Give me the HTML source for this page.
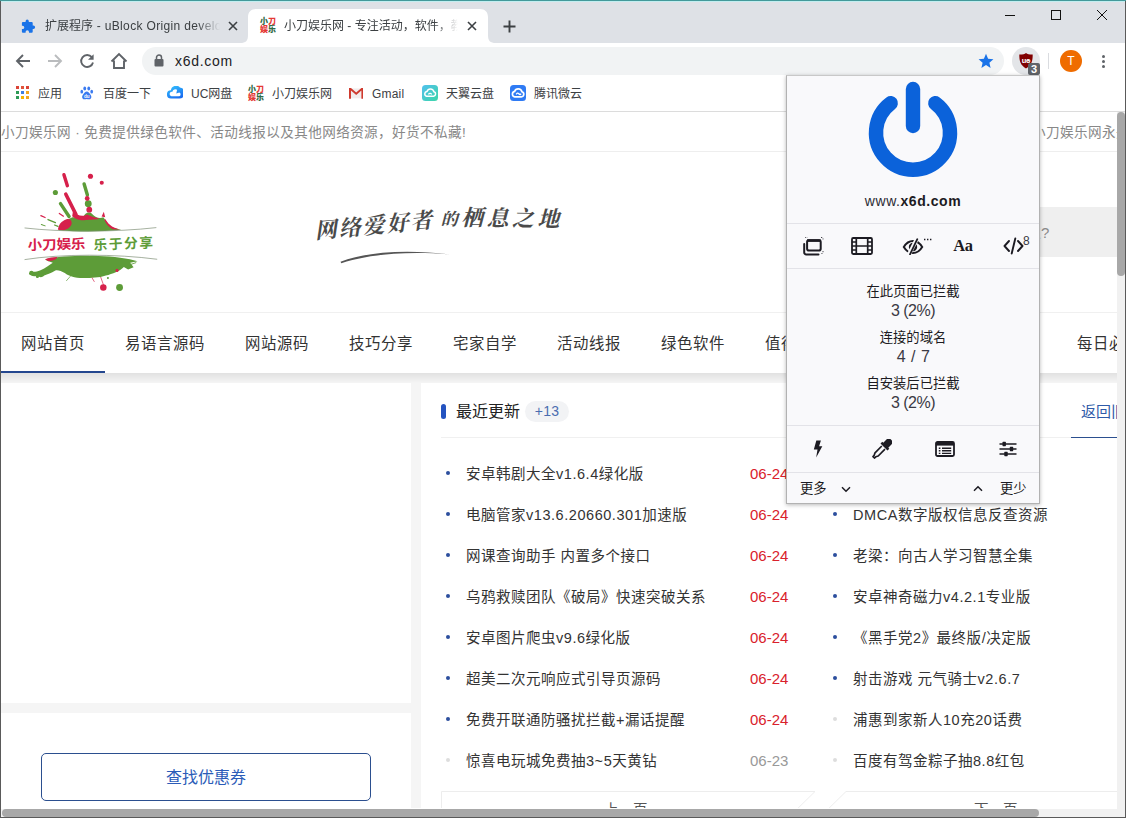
<!DOCTYPE html>
<html lang="zh-CN">
<head>
<meta charset="utf-8">
<title>小刀娱乐网 - 专注活动，软件，教程分享</title>
<style>
*{box-sizing:border-box;margin:0;padding:0}
html,body{width:1126px;height:818px;overflow:hidden;background:#fff}
body{font-family:"Liberation Sans","Noto Sans CJK SC",sans-serif;color:#333;position:relative}
.abs{position:absolute}
#win{position:absolute;left:0;top:0;width:1126px;height:818px;overflow:hidden;background:#fff}
/* ---------- chrome ---------- */
#tabstrip{left:0;top:0;width:1126px;height:43px;background:#dee1e6}
#topline{left:0;top:0;width:1126px;height:2px;background:linear-gradient(#43999a 0,#43999a 50%,#c2eef0 50%,#c2eef0 100%)}
#toolbar{left:0;top:42px;width:1126px;height:36px;background:linear-gradient(transparent 0,transparent 1px,#fff 1px,#fff 100%)}
#bookmarks{left:0;top:78px;width:1126px;height:33px;background:#fff}
#bmline{left:0;top:111px;width:1126px;height:1px;background:#dcdcdc}
.tabtxt i{font-style:normal;letter-spacing:.35px}
.tabtxt{font-size:12px;color:#3c4043;white-space:nowrap;overflow:hidden}
.bm{font-size:12px;color:#3c4043;white-space:nowrap;top:86px;line-height:16px}
#omni{left:142px;top:47px;width:862px;height:28px;border-radius:14px;background:#f1f3f4}
/* ---------- page ---------- */
#page{left:1px;top:112px;width:1116px;height:696px;background:#f5f5f5;overflow:hidden}
#topbar{left:0;top:0;width:1116px;height:40px;background:#fff;border-bottom:1px solid #eee;font-size:13.600px;letter-spacing:.4px;color:#888;line-height:39px;white-space:nowrap}
#header{left:0;top:40px;width:1116px;height:160px;background:#fff}
#nav{left:0;top:200px;width:1116px;height:61px;background:#fff;border-top:1px solid #f0f0f0;}
.navi{top:1px;height:60px;line-height:60px;font-size:15.400px;letter-spacing:.6px;color:#333;white-space:nowrap}
.card{background:#fff}
.li{font-size:14.500px;letter-spacing:.5px;color:#333;white-space:nowrap;line-height:20px}
.dt{font-size:15px;white-space:nowrap;line-height:20px;color:#d9212c}
.li i{font-style:normal;letter-spacing:.55px}
.dot{width:4px;height:4px;border-radius:2px;background:#2c4f9e;margin-top:-1px}
.dot.g{background:#ddd}
/* ---------- popup ---------- */
#popup{left:786px;top:75px;width:254px;height:429px;background:#f9f9fb;border:1px solid #b2b2b2;border-top-color:#c8c8c8;box-shadow:0 1px 4px rgba(0,0,0,.28);font-size:14px;color:#1c1b22}
.stat-l{left:0;width:252px;text-align:center;font-size:13.3px;line-height:16px;color:#1c1b22}
.stat-v{left:0;width:252px;text-align:center;font-size:16px;line-height:20px;color:#3a3a44;letter-spacing:-.5px}
.hr{left:0;width:252px;height:1px;background:#e3e3e8}
</style>
</head>
<body>
<div id="win">

<!-- ================= PAGE ================= -->
<div id="page" class="abs">
  <div id="topbar" class="abs"><span class="abs" style="left:0px;top:1px">小刀娱乐网 · 免费提供绿色软件、活动线报以及其他网络资源，好货不私藏!</span><span class="abs" style="left:1031px;top:1px">小刀娱乐网永久地址</span></div>
  <div id="header" class="abs">
    <!-- logo: traced in 5.84x zoom coords of region (10,160) -->
    <svg class="abs" style="left:9px;top:8px" width="170" height="140" viewBox="0 0 993 818">
      <g fill="#5d9c38" stroke="none">
        <path d="M285 410 C300 370 340 345 365 335 C390 330 410 345 430 330 C440 305 465 300 480 315 C500 335 520 345 545 335 C555 345 565 370 590 390 C610 400 630 402 650 408 C530 420 400 420 285 410 Z"/>
        <circle cx="265" cy="190" r="15"/><circle cx="457" cy="255" r="20"/>
        <path d="M205 580 C330 553 560 553 700 580 L745 592 L702 601 L722 626 L690 640 L665 625 C640 650 600 665 560 675 C520 690 470 688 440 690 C400 690 350 685 320 660 C300 650 280 640 265 645 C240 660 220 665 200 675 C185 690 170 685 160 675 C140 685 115 675 110 662 C125 650 150 655 175 645 C210 630 235 610 250 600 C235 595 215 590 205 580 Z"/>
        <circle cx="125" cy="660" r="13"/><circle cx="160" cy="680" r="9"/><circle cx="640" cy="745" r="20"/><circle cx="572" cy="690" r="6"/>
      </g>
      <g stroke="#5d9c38" stroke-linecap="round" fill="none">
        <path d="M295 255 L345 330" stroke-width="20"/><path d="M433 140 L452 205" stroke-width="20"/>
        <path d="M222 348 L265 366" stroke-width="8"/><path d="M183 377 L205 385" stroke-width="6"/><path d="M260 380 L280 388" stroke-width="7"/>
        <path d="M352 680 L330 705" stroke-width="4"/><path d="M700 612 L735 600" stroke-width="5"/>
      </g>
      <g fill="#d6204b" stroke="none">
        <path d="M280 408 C282 380 300 355 330 346 C350 342 362 355 360 372 C355 392 335 405 315 410 Z"/>
        <path d="M368 300 C390 328 430 332 450 318 C470 330 500 335 522 342 C500 352 470 346 450 351 C420 354 390 350 363 328 Z"/>
        <path d="M535 330 L548 303 L556 335 Z"/>
        <path d="M556 345 C580 385 610 400 645 406 L600 405 C580 396 563 376 552 352 Z"/>
        <circle cx="470" cy="95" r="15"/><circle cx="536" cy="133" r="12"/><circle cx="451" cy="225" r="14"/><circle cx="463" cy="290" r="17"/>
        <path d="M205 580 C225 572 255 567 277 567 C272 582 247 590 225 592 Z"/>
        <circle cx="545" cy="745" r="19"/><circle cx="625" cy="645" r="9"/>
      </g>
      <g stroke="#d6204b" stroke-linecap="round" fill="none">
        <path d="M315 86 L335 150" stroke-width="20"/><path d="M326 200 L385 318" stroke-width="21"/>
        <path d="M180 325 L205 336" stroke-width="7"/><path d="M288 312 L312 328" stroke-width="7"/>
        <path d="M480 690 L492 710" stroke-width="4"/><path d="M530 685 L548 735" stroke-width="4"/>
      </g>
      <path d="M85 397 C300 422 620 422 855 395" stroke="#7d8c74" stroke-width="4" fill="none"/>
      <path d="M85 582 C300 548 620 548 860 580" stroke="#7d8c74" stroke-width="4" fill="none"/>
      <text x="103" y="522" font-size="80" font-weight="700" fill="#d6204b" font-family="Liberation Sans, Noto Sans CJK SC, sans-serif" textLength="338" lengthAdjust="spacingAndGlyphs" transform="rotate(-1.500 270 500)">小刀娱乐</text>
      <text x="488" y="518" font-size="80" font-weight="700" fill="#5d9c38" font-family="Liberation Sans, Noto Sans CJK SC, sans-serif" textLength="348" lengthAdjust="spacing" transform="rotate(-2.500 660 495)">乐于分享</text>
    </svg>
    <!-- slogan -->
    <div class="abs" style="left:313px;top:63px;width:130px;height:34px;font-family:'Liberation Serif','Noto Serif CJK SC',serif;font-weight:700;font-size:22px;line-height:34px;color:#4a4a4a;white-space:nowrap;transform-origin:0 100%;letter-spacing:2px;transform:rotate(-5.500deg) skewX(-14deg)">网络爱好者</div>
    <div class="abs" style="left:437px;top:49px;width:130px;height:34px;font-family:'Liberation Serif','Noto Serif CJK SC',serif;font-weight:700;font-size:22px;line-height:34px;color:#4a4a4a;white-space:nowrap;transform-origin:0 100%;letter-spacing:3.400px;transform:rotate(0.800deg) skewX(-14deg)"><span style="font-size:17px">的</span>栖息之地</div>
    <svg class="abs" style="left:336px;top:94px" width="120" height="20" viewBox="0 0 120 20"><path d="M3.500 15.800 C30 5.500 70 3 113 8.400 C70 5 32 8 4.300 17.300 Z" fill="#555"/></svg>
    <!-- search box -->
    <div class="abs" style="left:1030px;top:55px;width:90px;height:50px;background:#efefef"></div>
    <div class="abs" style="left:1025px;top:69px;font-size:15px;line-height:24px;color:#8a8a8a;white-space:nowrap">么?</div>
  </div>
  <div id="nav" class="abs">
    <span class="abs navi" style="left:20px">网站首页</span>
    <span class="abs navi" style="left:124px">易语言源码</span>
    <span class="abs navi" style="left:244px">网站源码</span>
    <span class="abs navi" style="left:348px">技巧分享</span>
    <span class="abs navi" style="left:452px">宅家自学</span>
    <span class="abs navi" style="left:556px">活动线报</span>
    <span class="abs navi" style="left:660px">绿色软件</span>
    <span class="abs navi" style="left:764px">值得一看</span>
    <span class="abs navi" style="left:1076px">每日必买</span>
    <div class="abs" style="left:0;top:58px;width:104px;height:2px;background:#24478f"></div>
  </div>
  <div class="abs" style="left:0;top:261px;width:1116px;height:10px;background:linear-gradient(#e1e1e1,#f5f5f5)"></div>
  <div class="abs card" style="left:0;top:271px;width:410px;height:320px"></div>
  <div class="abs card" style="left:0;top:601px;width:410px;height:120px">
    <div class="abs" style="left:40px;top:40px;width:330px;height:48px;border:1px solid #2b4f8f;border-radius:5px;color:#2b5cb8;font-size:16px;line-height:48px;text-align:center">查找优惠券</div>
  </div>
  <div class="abs card" id="rcard" style="left:420px;top:271px;width:700px;height:440px">
    <div class="abs" style="left:20px;top:21px;width:5px;height:15px;border-radius:2.500px;background:#2453c0"></div>
    <div class="abs" style="left:35px;top:17px;font-size:16px;line-height:24px;color:#222;white-space:nowrap">最近更新</div>
    <div class="abs" style="left:104px;top:18px;width:44px;height:21px;border-radius:11px;background:#f2f3f5;color:#4a6db0;font-size:14px;line-height:21px;text-align:center;letter-spacing:.3px">+13</div>
    <div class="abs" style="left:660px;top:17px;font-size:15px;line-height:24px;color:#2f5aa8;white-space:nowrap">返回旧版</div>
    <div class="abs" style="left:20px;top:54px;width:680px;height:1px;background:#f0f0f0"></div>
    <div class="abs" style="left:650px;top:54px;width:50px;height:1px;background:#2b4f8f"></div>
    <div class="abs dot" style="left:25px;top:89px"></div><div class="abs li" style="left:45px;top:81px">安卓韩剧大全<i>v1.6.4</i>绿化版</div><div class="abs dt" style="left:329px;top:81px">06-24</div>
    <div class="abs dot" style="left:25px;top:130px"></div><div class="abs li" style="left:45px;top:122px">电脑管家<i>v13.6.20660.301</i>加速版</div><div class="abs dt" style="left:329px;top:122px">06-24</div>
    <div class="abs dot" style="left:25px;top:171px"></div><div class="abs li" style="left:45px;top:163px">网课查询助手 内置多个接口</div><div class="abs dt" style="left:329px;top:163px">06-24</div>
    <div class="abs dot" style="left:25px;top:212px"></div><div class="abs li" style="left:45px;top:204px">乌鸦救赎团队《破局》快速突破关系</div><div class="abs dt" style="left:329px;top:204px">06-24</div>
    <div class="abs dot" style="left:25px;top:253px"></div><div class="abs li" style="left:45px;top:245px">安卓图片爬虫<i>v9.6</i>绿化版</div><div class="abs dt" style="left:329px;top:245px">06-24</div>
    <div class="abs dot" style="left:25px;top:294px"></div><div class="abs li" style="left:45px;top:286px">超美二次元响应式引导页源码</div><div class="abs dt" style="left:329px;top:286px">06-24</div>
    <div class="abs dot" style="left:25px;top:335px"></div><div class="abs li" style="left:45px;top:327px">免费开联通防骚扰拦截+漏话提醒</div><div class="abs dt" style="left:329px;top:327px">06-24</div>
    <div class="abs dot g" style="left:25px;top:376px"></div><div class="abs li" style="left:45px;top:368px">惊喜电玩城免费抽<i>3~5</i>天黄钻</div><div class="abs dt" style="left:329px;top:368px;color:#999">06-23</div>
    <div class="abs dot" style="left:412px;top:89px"></div><div class="abs li" style="left:432px;top:81px">微信读书每周组队抽无限卡</div>
    <div class="abs dot" style="left:412px;top:130px"></div><div class="abs li" style="left:432px;top:122px"><i>DMCA</i>数字版权信息反查资源</div>
    <div class="abs dot" style="left:412px;top:171px"></div><div class="abs li" style="left:432px;top:163px">老梁：向古人学习智慧全集</div>
    <div class="abs dot" style="left:412px;top:212px"></div><div class="abs li" style="left:432px;top:204px">安卓神奇磁力<i>v4.2.1</i>专业版</div>
    <div class="abs dot" style="left:412px;top:253px"></div><div class="abs li" style="left:432px;top:245px">《黑手党<i>2</i>》最终版<i>/</i>决定版</div>
    <div class="abs dot" style="left:412px;top:294px"></div><div class="abs li" style="left:432px;top:286px">射击游戏 元气骑士<i>v2.6.7</i></div>
    <div class="abs dot g" style="left:412px;top:335px"></div><div class="abs li" style="left:432px;top:327px">浦惠到家新人<i>10</i>充<i>20</i>话费</div>
    <div class="abs dot g" style="left:412px;top:376px"></div><div class="abs li" style="left:432px;top:368px">百度有驾金粽子抽<i>8.8</i>红包</div>
    <svg class="abs" style="left:20px;top:408px" width="680" height="30" viewBox="0 0 680 30"><path d="M0.500 30 V0.500 H374 L344 30 M680 0.500 H405 L375 30" stroke="#ededed" stroke-width="1" fill="none"/></svg>
    <div class="abs" style="left:183px;top:417px;font-size:14.500px;line-height:20px;color:#555;white-space:nowrap">上一页</div>
    <div class="abs" style="left:553px;top:417px;font-size:14.500px;line-height:20px;color:#555;white-space:nowrap">下一页</div>
  </div>
</div>

<!-- ================= CHROME ================= -->
<div id="tabstrip" class="abs">
  <!-- active tab shape -->
  <svg class="abs" style="left:240px;top:9px" width="256" height="34" viewBox="0 0 256 33" preserveAspectRatio="none">
    <path d="M0 33 C6 33 8 31 8 25 L8 8 C8 3 11 0 16 0 L240 0 C245 0 248 3 248 8 L248 25 C248 31 250 33 256 33 Z" fill="#fff"/>
  </svg>
  <!-- tab 1 -->
  <svg class="abs" style="left:21px;top:19px" width="15" height="15" viewBox="0 0 15 15">
    <path d="M6.2 0.6 a1.6 1.6 0 0 1 1.6 1.6 v0.7 h2.9 a1 1 0 0 1 1 1 v2.6 h0.7 a1.7 1.7 0 0 1 0 3.4 h-0.7 v2.9 a1 1 0 0 1 -1 1 h-2.7 v-0.8 a1.7 1.7 0 0 0 -3.4 0 v0.8 h-2.7 a1 1 0 0 1 -1 -1 v-2.7 h0.7 a1.7 1.7 0 0 0 0 -3.4 h-0.7 v-2.8 a1 1 0 0 1 1 -1 h2.7 v-0.7 a1.6 1.6 0 0 1 1.6 -1.6 z" fill="#1a73e8"/>
  </svg>
  <div class="abs tabtxt" style="left:45px;top:18px;width:178px;height:17px;line-height:17px;-webkit-mask-image:linear-gradient(90deg,#000 152px,transparent 175px);mask-image:linear-gradient(90deg,#000 152px,transparent 175px)">扩展程序<i> - uBlock Origin development</i></div>
  <svg class="abs" style="left:228px;top:21px" width="10" height="10" viewBox="0 0 10 10"><path d="M1 1 L9 9 M9 1 L1 9" stroke="#3c4043" stroke-width="1.6" fill="none"/></svg>
  <!-- tab 2 favicon -->
  <div class="abs" style="left:260px;top:18px;width:16px;height:16px;font-size:8px;line-height:8px;font-weight:900;letter-spacing:0;white-space:nowrap"><span style="color:#2f6a45">小</span><span style="color:#e53935">刀</span><br><span style="color:#e53935">娱</span><span style="color:#2f6a45">乐</span></div>
  <div class="abs tabtxt" style="left:284px;top:18px;width:178px;height:17px;line-height:17px;-webkit-mask-image:linear-gradient(90deg,#000 150px,transparent 174px);mask-image:linear-gradient(90deg,#000 150px,transparent 174px)">小刀娱乐网 - 专注活动，软件，教程分享</div>
  <svg class="abs" style="left:467px;top:21px" width="10" height="10" viewBox="0 0 10 10"><path d="M1 1 L9 9 M9 1 L1 9" stroke="#3c4043" stroke-width="1.6" fill="none"/></svg>
  <!-- new tab -->
  <svg class="abs" style="left:503px;top:20px" width="13" height="13" viewBox="0 0 13 13"><path d="M6.5 0.5 V12.5 M0.5 6.5 H12.5" stroke="#3c4043" stroke-width="1.9" fill="none"/></svg>
  <!-- window controls -->
  <div class="abs" style="left:1005px;top:15px;width:10px;height:1px;background:#111"></div>
  <div class="abs" style="left:1051px;top:10px;width:10px;height:10px;border:1px solid #111"></div>
  <svg class="abs" style="left:1097px;top:10px" width="10" height="10" viewBox="0 0 10 10"><path d="M0 0 L10 10 M10 0 L0 10" stroke="#111" stroke-width="1" fill="none"/></svg>
</div>
<div id="toolbar" class="abs">
  <!-- back -->
  <svg class="abs" style="left:15px;top:11px" width="16" height="16" viewBox="0 0 16 16"><path d="M15 8 H2.5 M8 2 L2 8 L8 14" stroke="#5f6368" stroke-width="1.9" fill="none"/></svg>
  <!-- forward -->
  <svg class="abs" style="left:47px;top:11px" width="16" height="16" viewBox="0 0 16 16"><path d="M1 8 H13.5 M8 2 L14 8 L8 14" stroke="#babcbe" stroke-width="1.9" fill="none"/></svg>
  <!-- reload -->
  <svg class="abs" style="left:79px;top:11px" width="16" height="16" viewBox="0 0 16 16"><path d="M12.8 4.2 A6 6 0 1 0 14 9.5" stroke="#5f6368" stroke-width="1.9" fill="none"/><path d="M14.6 1.2 V6.8 H9 Z" fill="#5f6368"/></svg>
  <!-- home -->
  <svg class="abs" style="left:110px;top:10px" width="18" height="18" viewBox="0 0 18 18"><path d="M1.5 9.5 L9 2 L16.5 9.5 M4 8.5 V16 H14 V8.5" stroke="#5f6368" stroke-width="1.9" fill="none" stroke-linejoin="miter"/></svg>
  <!-- ublock button -->
  <div class="abs" style="left:1012px;top:5px;width:28px;height:28px;border-radius:14px;background:#e3e5e8"></div>
  <svg class="abs" style="left:1019px;top:11px" width="14" height="15.500" viewBox="0 0 14 15.500"><path d="M7 0 C5.600 1.100 3.400 1.700 0.300 1.600 C0.200 8 1.600 12.600 7 15.400 C12.400 12.600 13.800 8 13.700 1.600 C10.600 1.700 8.400 1.100 7 0 Z" fill="#800000"/><text x="7.100" y="9.600" font-size="7.500" font-weight="bold" font-family="Liberation Sans, sans-serif" fill="#fff" text-anchor="middle" letter-spacing="-0.3">uo</text><circle cx="9.100" cy="7.400" r="0.900" fill="#fff"/></svg>
  <div class="abs" style="left:1028px;top:21px;width:12px;height:12px;border-radius:2px;background:#5f6368;color:#fff;font-size:11px;line-height:12px;font-weight:bold;text-align:center">3</div>
  <div class="abs" style="left:1048px;top:11px;width:1px;height:16px;background:#dadce0"></div>
  <div class="abs" style="left:1060px;top:8px;width:22px;height:22px;border-radius:11px;background:#ef6c00;color:#fff;font-size:12px;line-height:22px;text-align:center">T</div>
  <div class="abs" style="left:1102px;top:13px;width:3px;height:3px;border-radius:2px;background:#5f6368"></div>
  <div class="abs" style="left:1102px;top:18px;width:3px;height:3px;border-radius:2px;background:#5f6368"></div>
  <div class="abs" style="left:1102px;top:23px;width:3px;height:3px;border-radius:2px;background:#5f6368"></div>
</div>
<div id="omni" class="abs">
  <svg class="abs" style="left:12px;top:7px" width="10" height="13" viewBox="0 0 10 13"><path d="M2.500 5 V3.500 a2.500 2.500 0 0 1 5 0 V5" stroke="#5f6368" stroke-width="1.500" fill="none"/><rect x="0.5" y="5" width="9" height="7.500" rx="1" fill="#5f6368"/></svg>
  <div class="abs" style="left:33px;top:5px;font-size:14px;line-height:18px;color:#202124;white-space:nowrap;letter-spacing:.7px">x6d.com</div>
  <svg class="abs" style="left:836px;top:6px" width="16" height="16" viewBox="0 0 16 16"><path d="M8 0.800 L10.100 5.700 L15.400 6.200 L11.400 9.700 L12.600 14.900 L8 12.100 L3.400 14.900 L4.600 9.700 L0.600 6.200 L5.900 5.700 Z" fill="#1a73e8"/></svg>
</div>
<div id="bookmarks" class="abs">
  <!-- apps -->
  <svg class="abs" style="left:16px;top:8px" width="13" height="13" viewBox="0 0 13 13">
    <rect x="0" y="0" width="3" height="3" fill="#db4437"/><rect x="5" y="0" width="3" height="3" fill="#e0523a"/><rect x="10" y="0" width="3" height="3" fill="#db4437"/>
    <rect x="0" y="5" width="3" height="3" fill="#2e9a56"/><rect x="5" y="5" width="3" height="3" fill="#3f7fe0"/><rect x="10" y="5" width="3" height="3" fill="#f2a520"/>
    <rect x="0" y="10" width="3" height="3" fill="#2e9a56"/><rect x="5" y="10" width="3" height="3" fill="#f4b400"/><rect x="10" y="10" width="3" height="3" fill="#f2a520"/>
  </svg>
  <!-- baidu paw -->
  <svg class="abs" style="left:80px;top:8px" width="13.500" height="14.300" viewBox="0 0 16 17">
    <ellipse cx="5.600" cy="3" rx="1.700" ry="2.400" fill="#3a7af0"/><ellipse cx="10.400" cy="3" rx="1.700" ry="2.400" fill="#3a7af0"/>
    <ellipse cx="2.100" cy="6.800" rx="1.600" ry="2.200" fill="#3a7af0"/><ellipse cx="13.900" cy="6.800" rx="1.600" ry="2.200" fill="#3a7af0"/>
    <path d="M8 6.500 C10 6.500 11 8.500 12.500 10.300 C14.300 12.300 13.500 15.800 10.800 15.800 C9.600 15.800 8.900 15.400 8 15.400 C7.100 15.400 6.400 15.800 5.200 15.800 C2.500 15.800 1.700 12.300 3.500 10.300 C5 8.500 6 6.500 8 6.500 Z" fill="#3a7af0"/>
    <text x="8" y="14.300" font-size="5.500" font-family="Liberation Sans, sans-serif" font-weight="bold" fill="#fff" text-anchor="middle">du</text>
  </svg>
  <!-- UC cloud -->
  <svg class="abs" style="left:167px;top:8px" width="16" height="13" viewBox="0 0 16 13">
    <defs><linearGradient id="ucg" x1="0" y1="0" x2="0.600" y2="1"><stop offset="0" stop-color="#35c8ff"/><stop offset="1" stop-color="#1a6cf0"/></linearGradient></defs>
    <path d="M4.200 12.500 H12 A3.800 3.800 0 0 0 12.900 1.400 A5.200 5.200 0 0 0 3.900 4.300 A4.100 4.100 0 0 0 4.200 12.500 Z" fill="url(#ucg)"/>
    <path d="M4.400 10.300 H11.800 A1.900 1.900 0 0 0 12.300 6.600 L9.300 7.600 L10.100 3.700 A3.300 3.300 0 0 0 5.400 5.800 A2.300 2.300 0 0 0 4.400 10.300 Z" fill="#fff"/>
  </svg>
  <!-- xiaodao favicon -->
  <div class="abs" style="left:248px;top:8px;width:16px;height:16px;font-size:8px;line-height:8px;font-weight:900;white-space:nowrap"><span style="color:#2f6a45">小</span><span style="color:#e53935">刀</span><br><span style="color:#e53935">娱</span><span style="color:#2f6a45">乐</span></div>
  <!-- gmail -->
  <svg class="abs" style="left:349px;top:10px" width="14.400" height="10.800" viewBox="0 0 16 12">
    <rect x="0.500" y="0.500" width="15" height="11" fill="#f1ecec"/>
    <path d="M0 0 H2.200 L8 5 L13.800 0 H16 V12 H13.800 V2.900 L8 7.900 L2.200 2.900 V12 H0 Z" fill="#cf392e"/>
  </svg>
  <!-- tianyi -->
  <svg class="abs" style="left:422px;top:7px" width="16" height="16" viewBox="0 0 16 16">
    <defs><linearGradient id="tyg" x1="0" y1="0" x2="1" y2="1"><stop offset="0" stop-color="#52c0ee"/><stop offset="1" stop-color="#3cd6a8"/></linearGradient></defs>
    <rect width="16" height="16" rx="3.500" fill="url(#tyg)"/>
    <path d="M4.600 11.200 H11.600 A2.300 2.300 0 0 0 11.900 6.700 A3.600 3.600 0 0 0 5 6.400 A2.450 2.450 0 0 0 4.600 11.200 Z" stroke="#fff" stroke-width="1.500" fill="none"/>
    <path d="M6.400 9.300 Q8 7.400 9.800 9.300" stroke="#fff" stroke-width="1.200" fill="none"/>
  </svg>
  <!-- weiyun -->
  <svg class="abs" style="left:510px;top:7px" width="16" height="16" viewBox="0 0 16 16">
    <rect width="16" height="16" rx="3.500" fill="#2f7bf4"/>
    <path d="M4.700 11.800 H11.300 A2.600 2.600 0 0 0 11.900 6.700 A3.800 3.800 0 0 0 4.600 6.400 A2.750 2.750 0 0 0 4.700 11.800 Z" stroke="#fff" stroke-width="1.700" fill="none"/>
    <path d="M6.200 9.300 Q7.400 7.300 8.800 8.800 T11 8.600" stroke="#fff" stroke-width="1.300" fill="none"/>
  </svg>
</div>
<span class="abs bm" style="left:38px">应用</span>
<span class="abs bm" style="left:103px">百度一下</span>
<span class="abs bm" style="left:191px">UC网盘</span>
<span class="abs bm" style="left:272px">小刀娱乐网</span>
<span class="abs bm" style="left:372px;letter-spacing:.2px">Gmail</span>
<span class="abs bm" style="left:446px">天翼云盘</span>
<span class="abs bm" style="left:534px">腾讯微云</span>
<div id="bmline" class="abs"></div>
<div id="topline" class="abs"></div>

<!-- ================= POPUP ================= -->
<div id="popup" class="abs">
  <!-- power -->
  <svg class="abs" style="left:76px;top:0px" width="100" height="104" viewBox="0 0 100 104">
    <path d="M27.7 27.200 A37 37 0 1 0 72.300 27.200" stroke="#0b62da" stroke-width="14.400" stroke-linecap="round" fill="none"/>
    <path d="M50 13 V50" stroke="#0b62da" stroke-width="14.400" stroke-linecap="round" fill="none"/>
  </svg>
  <div class="abs" style="left:0;top:115px;width:252px;text-align:center;font-size:14px;line-height:20px;color:#2b2a33;letter-spacing:.55px;white-space:nowrap">www.<b style="color:#1c1b22">x6d.com</b></div>
  <div class="abs hr" style="top:147px"></div>
  <!-- tool row 1 -->
  <svg class="abs" style="left:14px;top:160px" width="23" height="20" viewBox="0 0 23 20">
    <rect x="6.100" y="4.200" width="13.600" height="10.400" rx="1.800" stroke="#1c1b22" stroke-width="2" fill="none"/>
    <path d="M6 4.600 H19.800" stroke="#1c1b22" stroke-width="2.600"/>
    <path d="M3.200 8 V16.400 A2 2 0 0 0 5.200 18.400 H17.500" stroke="#1c1b22" stroke-width="2" fill="none" stroke-linecap="round"/>
    <path d="M4.300 1.500 h2 M20 1.500 h2 M22 2.500 v1.500 M22 15 v2 M20.500 17.500 h1.500" stroke="#1c1b22" stroke-width="0.900" stroke-dasharray="0.900 0.900" fill="none"/>
  </svg>
  <svg class="abs" style="left:64px;top:161px" width="22" height="18" viewBox="0 0 22 18">
    <rect x="1" y="1" width="20" height="16" rx="1.200" stroke="#1c1b22" stroke-width="1.800" fill="none"/>
    <path d="M5.300 1 V17 M16.700 1 V17 M5.300 9 H16.700 M1 5 H5.300 M1 9 H5.300 M1 13 H5.300 M16.700 5 H21 M16.700 9 H21 M16.700 13 H21" stroke="#1c1b22" stroke-width="1.700" fill="none"/>
  </svg>
  <svg class="abs" style="left:115px;top:161px" width="32" height="18" viewBox="0 0 32 18">
    <path d="M1.800 10 C4.500 5.500 8 4 11 4 C14 4 17.500 5.500 20.200 10 C17.500 14.500 14 16 11 16 C8 16 4.500 14.500 1.800 10 Z" stroke="#1c1b22" stroke-width="2" fill="none"/>
    <path d="M11 5.800 A4.200 4.200 0 1 0 11 14.200 A4.200 4.200 0 1 0 11 5.800 Z" fill="#1c1b22"/>
    <path d="M14.800 2 L7 17.500" stroke="#f9f9fb" stroke-width="4"/>
    <path d="M15.300 2.200 L8 17.300" stroke="#1c1b22" stroke-width="1.800" stroke-linecap="round"/>
    <path d="M22 2.500 h1.400 M25 2.500 h1.400 M28 2.500 h1.400" stroke="#1c1b22" stroke-width="1.300"/>
  </svg>
  <div class="abs" style="left:165px;top:158px;width:22px;height:22px;font-family:'Liberation Serif',serif;font-weight:bold;font-size:16.500px;line-height:23px;color:#1c1b22;text-align:center;letter-spacing:-.3px">Aa</div>
  <svg class="abs" style="left:216px;top:161px" width="21" height="18" viewBox="0 0 21 18">
    <path d="M6 4 L1.500 9 L6 14 M15 4 L19.500 9 L15 14 M12.300 1.500 L8.700 16.500" stroke="#1c1b22" stroke-width="1.900" fill="none" stroke-linecap="round" stroke-linejoin="round"/>
  </svg>
  <div class="abs" style="left:236px;top:158px;font-size:12px;line-height:14px;color:#3a3a44">8</div>
  <div class="abs hr" style="top:192px"></div>
  <!-- stats -->
  <div class="abs stat-l" style="top:208px">在此页面已拦截</div>
  <div class="abs stat-v" style="top:225px">3 (2%)</div>
  <div class="abs stat-l" style="top:254px">连接的域名</div>
  <div class="abs stat-v" style="top:271px;word-spacing:2px">4 / 7</div>
  <div class="abs stat-l" style="top:300px">自安装后已拦截</div>
  <div class="abs stat-v" style="top:317px">3 (2%)</div>
  <div class="abs hr" style="top:349px"></div>
  <!-- tool row 2 -->
  <svg class="abs" style="left:26px;top:364px" width="10" height="18" viewBox="0 0 12 19" preserveAspectRatio="none"><path d="M4 0.500 H9.500 L7.300 6.500 H11.200 L3.800 18.500 L5.400 10 H1 Z" fill="#1c1b22"/></svg>
  <svg class="abs" style="left:85px;top:363px" width="20" height="20" viewBox="0 0 20 20">
    <path d="M14.200 0.800 A3.500 3.500 0 0 1 19.200 5.800 L16.300 8.700 L17.300 9.700 L15.500 11.500 L8.500 4.500 L10.300 2.700 L11.300 3.700 Z" fill="#1c1b22"/>
    <path d="M9.800 7 L3 13.800 L2.200 16.200 L1 17.600 L2.400 19 L3.800 17.800 L6.200 17 L13 10.200" stroke="#1c1b22" stroke-width="1.700" fill="none" stroke-linejoin="round"/>
  </svg>
  <svg class="abs" style="left:148px;top:365px" width="20" height="16" viewBox="0 0 20 16">
    <rect x="1" y="1" width="18" height="14" rx="1.500" stroke="#1c1b22" stroke-width="1.800" fill="none"/>
    <rect x="1" y="1" width="18" height="3.600" fill="#1c1b22"/>
    <path d="M3.800 7.200 h1.600 M7 7.200 h9.200 M3.800 9.800 h1.600 M7 9.800 h9.200 M3.800 12.400 h1.600 M7 12.400 h9.200" stroke="#1c1b22" stroke-width="1.400"/>
  </svg>
  <svg class="abs" style="left:212px;top:365px" width="18" height="16" viewBox="0 0 18 16">
    <path d="M0.500 3 H17.500 M0.500 8 H17.500 M0.500 13 H17.500" stroke="#1c1b22" stroke-width="1.700"/>
    <rect x="3.500" y="0.800" width="3.400" height="4.400" rx="0.600" fill="#1c1b22"/>
    <rect x="10.800" y="5.800" width="3.400" height="4.400" rx="0.600" fill="#1c1b22"/>
    <rect x="5.300" y="10.800" width="3.400" height="4.400" rx="0.600" fill="#1c1b22"/>
  </svg>
  <div class="abs hr" style="top:396px"></div>
  <div class="abs" style="left:13px;top:405px;font-size:13.3px;line-height:16px;color:#1c1b22;white-space:nowrap">更多</div>
  <svg class="abs" style="left:54px;top:410px" width="10" height="7" viewBox="0 0 10 7"><path d="M1 1.200 L5 5.200 L9 1.200" stroke="#1c1b22" stroke-width="1.500" fill="none"/></svg>
  <svg class="abs" style="left:186px;top:409px" width="10" height="7" viewBox="0 0 10 7"><path d="M1 5.800 L5 1.800 L9 5.800" stroke="#1c1b22" stroke-width="1.500" fill="none"/></svg>
  <div class="abs" style="left:213px;top:405px;font-size:13.3px;line-height:16px;color:#1c1b22;white-space:nowrap">更少</div>
</div>

<!-- scrollbars -->
<div class="abs" style="left:1117px;top:112px;width:8px;height:697px;background:#f1f1f1"></div>
<div class="abs" style="left:1117px;top:112px;width:8px;height:164px;border-radius:4px;background:#a8a8a8"></div>
<div class="abs" style="left:1px;top:809px;width:1124px;height:8px;background:#f1f1f1"></div>
<div class="abs" style="left:2px;top:809px;width:1037px;height:8px;border-radius:4px;background:#a8a8a8"></div>
<div class="abs" style="left:0;top:817px;width:1126px;height:1px;background:#5a5a5a"></div>
<!-- window borders -->
<div class="abs" style="left:0;top:1px;width:1px;height:817px;background:#5a5a5a"></div>
<div class="abs" style="left:1125px;top:1px;width:1px;height:817px;background:#5a5a5a"></div>
</div>
</body>
</html>
